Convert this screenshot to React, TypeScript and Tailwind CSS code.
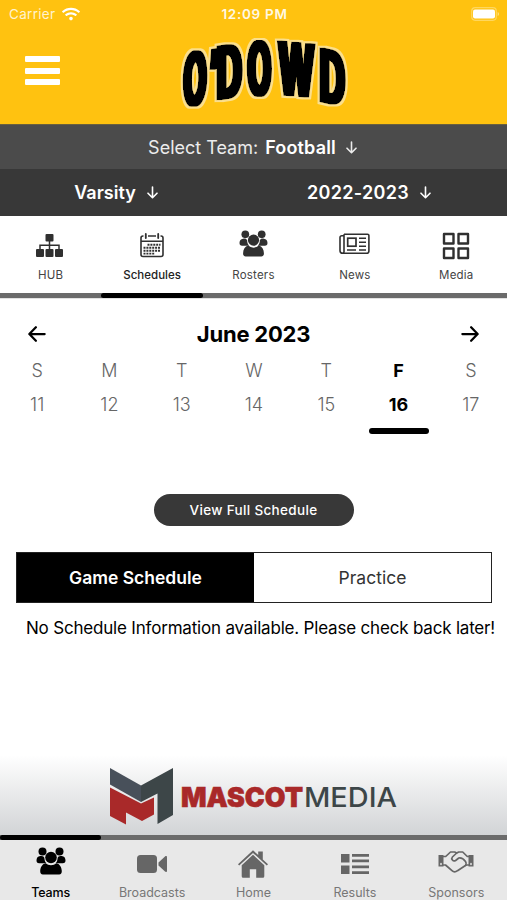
import { useState } from 'react'
import type { ReactNode } from 'react'
import clsx from 'clsx'
import { FaWifi } from 'react-icons/fa'

type IconProps = { className?: string }

function ArrowIcon({ className, strokeWidth = 2 }: IconProps & { strokeWidth?: number }) {
  return (
    <svg viewBox="0 0 16 16" className={className} fill="none" stroke="currentColor" strokeWidth={strokeWidth} strokeLinecap="round" strokeLinejoin="round">
      <path d="M14.800 8H1.500M7 2L1.200 8L7 14" />
    </svg>
  )
}

function DownArrow() {
  return (
    <svg viewBox="0 0 11 13" className="h-[13px] w-[11px]" fill="none" stroke="currentColor" strokeWidth={1.600} strokeLinecap="round" strokeLinejoin="round">
      <path d="M5.500 1v10.500M1 7.200l4.500 4.500L10 7.200" />
    </svg>
  )
}

function HubIcon() {
  return (
    <svg viewBox="0 0 27 23" className="mr-0.5 h-[23px] w-[27px]" fill="currentColor">
      <rect x="9.500" y="0" width="8" height="7.500" rx="1" />
      <rect x="0" y="15" width="8" height="8" rx="1" />
      <rect x="9.500" y="15" width="8" height="8" rx="1" />
      <rect x="19" y="15" width="8" height="8" rx="1" />
      <path d="M13.500 7v8M4 15v-3.700h19V15" fill="none" stroke="currentColor" strokeWidth="1.500" />
    </svg>
  )
}

function CalendarIcon() {
  return (
    <svg viewBox="0 0 24 25" className="h-[25px] w-6">
      <path d="M3.500 3H3a2 2 0 0 0-2 2v16.500a2 2 0 0 0 2 2h18a2 2 0 0 0 2-2V5a2 2 0 0 0-2-2h-.5M8 3h8M1 8.300h22" fill="none" stroke="currentColor" strokeWidth="1.600" />
      <path d="M5.800 1v4M18.200 1v4" stroke="currentColor" strokeWidth="1.800" strokeLinecap="round" />
      <path d="M7.500 11.800h13M3.500 14.800h17M3.500 17.800h17M3.500 20.600h11" stroke="currentColor" strokeWidth="1.900" strokeDasharray="2 0.900" fill="none" />
    </svg>
  )
}

function TeamIcon({ className }: IconProps) {
  return (
    <svg viewBox="0 0 30 28" className={className} fill="currentColor">
      <circle cx="6.500" cy="4.500" r="4" />
      <circle cx="23.500" cy="4.500" r="4" />
      <path d="M4.200 9C7 8.600 8.500 9.500 8.500 12c.2 1.900.8 3.200 2 4.300H3.200C1.300 16.300.4 15.300.5 13.300c.1-2.400 1.200-4.100 3.700-4.300zM25.800 9c-2.800-.4-4.300.5-4.300 3-.2 1.900-.8 3.200-2 4.300h7.300c1.900 0 2.800-1 2.700-3-.1-2.400-1.200-4.100-3.700-4.300z" />
      <circle cx="15" cy="10.500" r="5.800" />
      <path d="M9.500 16.200C6 17.200 4.300 20.300 4.200 24c0 2.200.8 3.500 2.700 3.500h16.200c1.900 0 2.700-1.300 2.700-3.500-.1-3.700-1.800-6.800-5.300-7.800a8.300 8.300 0 0 1-11 0z" />
    </svg>
  )
}

function NewsIcon() {
  return (
    <svg viewBox="0 0 31 22" className="mb-0.5 h-[22px] w-[31px]" fill="none" stroke="currentColor">
      <path d="M5 1.200h23.500a1.400 1.400 0 0 1 1.400 1.400V18a2.300 2.300 0 0 1-2.300 2.300H3.700A2.700 2.700 0 0 1 1 17.700V4.500a1.700 1.700 0 0 1 1.700-1.700H5M5 1.200V18a1.800 1.800 0 0 1-1.500 2.200" strokeWidth="1.600" />
      <rect x="8.700" y="5.200" width="8.300" height="8" strokeWidth="1.700" />
      <path d="M20 5.200h7M20 9.200h7M20 13.200h7M8 17h9M20 17h7" strokeWidth="1.600" />
    </svg>
  )
}

function GridIcon() {
  return (
    <svg viewBox="0 0 28 28" className="mt-0.5 size-7" fill="none" stroke="currentColor" strokeWidth="2.400" strokeLinejoin="round">
      <path d="M2 2h9.500v9.500H2zM16.500 2H26v9.500h-9.500zM2 16.500h9.500V26H2zM16.500 16.500H26V26h-9.500z" />
    </svg>
  )
}

function VideoIcon() {
  return (
    <svg viewBox="0 0 30 20" className="h-5 w-[30px]" fill="currentColor">
      <rect x="0" y="1" width="20" height="18" rx="3.500" />
      <path d="M21.500 8.500l6.500-6c1-.8 2-.4 2 .8v13.400c0 1.200-1 1.600-2 .8l-6.500-6z" />
    </svg>
  )
}

function HomeIcon() {
  return (
    <svg viewBox="0 0 30 28" className="h-7 w-[30px]" fill="currentColor">
      <path d="M0 14.200L15 .3l5.200 4.800V1.500h4.600v7.900l5.200 4.800-1.200 1.300L15 2.900 1.200 15.500z" />
      <path d="M15 4.800l11.300 10.400v11a1.500 1.500 0 0 1-1.500 1.500h-6.600v-8.500h-6.400v8.500H5.200a1.500 1.500 0 0 1-1.500-1.500v-11z" />
    </svg>
  )
}

function ResultsIcon() {
  return (
    <svg viewBox="0 0 28 20" className="h-5 w-7" fill="currentColor">
      <rect width="8.500" height="8.500" />
      <rect y="11.500" width="8.500" height="8.500" />
      <path d="M11 0h17v2.800H11zM11 5.500h17v2.800H11zM11 11.500h17v2.800H11zM11 17.200h17V20H11z" />
    </svg>
  )
}

function HandshakeIcon() {
  return (
    <svg viewBox="0 0 36 24" className="mb-1 h-6 w-9" fill="none" stroke="currentColor" strokeWidth="1.700" strokeLinejoin="round" strokeLinecap="round">
      <path d="M.5 5h5v11.500h-5zM30.500 5h5v11.500h-5z" fill="currentColor" stroke="none" />
      <path d="M3 13.500v1M33 13.500v1" stroke="#e8e8e8" strokeWidth="1.500" />
      <path d="M5.500 6.500h2.200L12.500 2h4.200l2 1 2-1h4l4.600 4.500h1.200M5.500 15h2l6.500 5.700c1.700 1.600 3.500 1.600 5.500 0l8.700-5.700h2.300" />
      <path d="M18.700 3l-4.300 4c-1.600 1.900.6 5 3.200 3.500l3.200-2.500c3.200-.6 5.200 1.500 6.700 3.500 1.200 1.800 1 2.700.2 3.900" />
    </svg>
  )
}

// sx squeezes each letter, skew tilts it along the arch
const letters = [
  { char: 'O', x: 2.5, y: 71.5, size: 75, sx: 0.4, skew: -0.32 },
  { char: '’', x: 27.5, y: 60, size: 66, sx: 0.55, skew: -0.2 },
  { char: 'D', x: 35.5, y: 62.5, size: 75, sx: 0.475, skew: -0.15 },
  { char: 'O', x: 66.5, y: 58, size: 75, sx: 0.41, skew: 0 },
  { char: 'W', x: 97, y: 57, size: 75, sx: 0.46, skew: 0.09 },
  { char: 'D', x: 138.5, y: 63.5, size: 75, sx: 0.475, skew: 0.24 },
]

function SchoolLogo() {
  return (
    <svg viewBox="0 0 170 74" className="h-[74px] w-[170px] overflow-visible" role="img">
      <defs>
        <filter id="logo-outline" x="-5%" y="-5%" width="110%" height="110%">
          <feMorphology in="SourceGraphic" operator="dilate" radius="2 0.1" result="bold" />
          <feMorphology in="bold" operator="dilate" radius="1.500" result="wide" />
          <feFlood floodColor="#fbdf8d" />
          <feComposite in2="wide" operator="in" result="edge" />
          <feMerge>
            <feMergeNode in="edge" />
            <feMergeNode in="bold" />
          </feMerge>
        </filter>
      </defs>
      <g filter="url(#logo-outline)" fontFamily="Inter, sans-serif" fontWeight="800">
        {letters.map((l, i) => (
          <text key={i} fontSize={l.size} transform={`matrix(${l.sx} ${l.skew * l.sx} 0 1 ${l.x} ${l.y})`}>{l.char}</text>
        ))}
      </g>
    </svg>
  )
}

function MascotMediaLogo() {
  return (
    <svg viewBox="0 0 290 60" className="h-[60px] w-[290px] overflow-visible">
      <path d="M1 1l31 17.500v16.500L1 17.500z" fill="#48505a" />
      <path d="M32 18.500L64 1v47L48.500 57V26.500L32 35z" fill="#3d4648" />
      <path d="M1 20.500l31 16 13-6v17l-12 6.500-16-8.500v12L1 49z" fill="#a92929" />
      <g fontFamily="Inter, sans-serif" fontSize="27.500" strokeWidth="0.600">
        <text x="72" y="40" textLength="122" lengthAdjust="spacingAndGlyphs" fontWeight="900" fill="#a92929" stroke="#a92929">MASCOT</text>
        <text x="195" y="40" textLength="93" lengthAdjust="spacingAndGlyphs" fontWeight="500" fill="#3d4648">MEDIA</text>
      </g>
    </svg>
  )
}

const sections: { label: string; icon: ReactNode }[] = [
  { label: 'HUB', icon: <HubIcon /> },
  { label: 'Schedules', icon: <CalendarIcon /> },
  { label: 'Rosters', icon: <TeamIcon className="mb-[3px] h-[27px] w-[29px]" /> },
  { label: 'News', icon: <NewsIcon /> },
  { label: 'Media', icon: <GridIcon /> },
]

const navItems: { label: string; icon: ReactNode }[] = [
  { label: 'Teams', icon: <TeamIcon className="h-[28px] w-[30px]" /> },
  { label: 'Broadcasts', icon: <VideoIcon /> },
  { label: 'Home', icon: <HomeIcon /> },
  { label: 'Results', icon: <ResultsIcon /> },
  { label: 'Sponsors', icon: <HandshakeIcon /> },
]

const days = [
  { name: 'S', date: 11 },
  { name: 'M', date: 12 },
  { name: 'T', date: 13 },
  { name: 'W', date: 14 },
  { name: 'T', date: 15 },
  { name: 'F', date: 16 },
  { name: 'S', date: 17 },
]

export default function App() {
  const [section, setSection] = useState('Schedules')
  const [selectedDate, setSelectedDate] = useState(16)
  const [tab, setTab] = useState('Game Schedule')

  return (
    <div className="flex h-[900px] w-[507px] flex-col overflow-hidden bg-white font-['Inter',sans-serif] text-black">
      <header className="h-[124px] shrink-0 bg-[#ffc210] text-white">
        <div className="grid h-7 grid-cols-3 items-center pl-[9px] pr-[7px] text-[13.5px]">
          <div className="flex items-center gap-[7px] tracking-[0.3px] text-[#fff3cf]">
            Carrier
            <FaWifi size={18} className="text-white" />
          </div>
          <div className="text-center font-semibold tracking-[0.7px] text-[#fff8e4]">12:09 PM</div>
          <div className="flex justify-end">
            <svg viewBox="0 0 29 14" className="h-3.5 w-[29px]">
              <rect x="0.700" y="0.700" width="24.600" height="12.600" rx="3.500" fill="none" stroke="#ffd75e" strokeWidth="1.200" />
              <rect x="2" y="2.500" width="22" height="9" rx="2" fill="#fff" />
              <path d="M26.700 5v4c1.700-.8 1.700-3.200 0-4z" fill="#ffe18a" />
            </svg>
          </div>
        </div>
        <div className="grid grid-cols-[156px_1fr_156px] pt-2.5">
          <button className="ml-[25px] mt-[18px] flex h-[29px] w-[35px] flex-col justify-between">
            <span className="h-[6px] w-full rounded-[1px] bg-white" />
            <span className="h-[6px] w-full rounded-[1px] bg-white" />
            <span className="h-[6px] w-full rounded-[1px] bg-white" />
          </button>
          <div className="ml-[25px]">
            <SchoolLogo />
          </div>
        </div>
      </header>

      <button className="flex h-[45px] shrink-0 items-center justify-center border-t border-[#69603f] bg-[#4b4b4b] pr-0.5 text-[18px] text-[#ececec]">
        <span>Select Team:</span>
        <span className="ml-[7px] mr-2.5 font-semibold tracking-[0.15px] text-white">Football</span>
        <DownArrow />
      </button>
      <div className="flex h-[47px] shrink-0 items-center bg-[#383838] text-[18px] font-semibold text-white">
        <button className="flex w-[232px] items-center justify-center gap-[11px]">
          Varsity
          <DownArrow />
        </button>
        <button className="flex w-[274px] items-center justify-center gap-[11px] tracking-[0.3px]">
          2022-2023
          <DownArrow />
        </button>
      </div>

      <nav className="grid h-[83px] shrink-0 grid-cols-5 border-b border-[#e2e2e2]">
        {sections.map(({ label, icon }) => (
          <button
            key={label}
            onClick={() => setSection(label)}
            className="flex flex-col items-center justify-between text-[#303030]"
          >
            <span className="mt-[15px] flex h-7 items-center">{icon}</span>
            <span
              className={clsx(
                'mt-[7px] text-[11.5px] leading-[18px]',
                section === label ? 'font-medium text-[#222]' : 'tracking-[0.2px] text-[#444]',
              )}
            >
              {label}
            </span>
            <span className="mt-auto h-[5px] w-full bg-[#6b6b6b]">
              {section === label && <span className="block h-full w-full rounded-full bg-black" />}
            </span>
          </button>
        ))}
      </nav>

      <main className="flex-1">
        <div className="flex h-[36px] items-center justify-between px-7 pt-[34px]">
          <button><ArrowIcon className="size-[18px]" /></button>
          <h1 className="text-[22px] font-bold leading-none tracking-[-0.2px]">June 2023</h1>
          <button><ArrowIcon className="size-[18px] rotate-180" /></button>
        </div>
        <div className="mt-[19px] grid grid-cols-7 pl-px">
          {days.map(({ name, date }) => (
            <button
              key={date}
              onClick={() => setSelectedDate(date)}
              className={clsx(
                'flex flex-col items-center text-[18px] leading-[34px]',
                selectedDate === date ? 'font-bold text-black' : 'font-light text-[#666]',
              )}
            >
              <span>{name}</span>
              <span>{date}</span>
              {selectedDate === date && <span className="mt-[6px] h-1.5 w-[60px] rounded-full bg-black" />}
            </button>
          ))}
        </div>

        <button className="mx-auto mt-[60px] block h-8 w-[200px] rounded-full bg-[#383838] text-[13.5px] font-medium tracking-[0.33px] text-white">
          View Full Schedule
        </button>

        <div className="mx-4 mt-[26px] grid h-[51px] w-[476px] grid-cols-2 border border-[#222] text-[17.5px]">
          {['Game Schedule', 'Practice'].map((label) => (
            <button
              key={label}
              onClick={() => setTab(label)}
              className={clsx('pt-px', tab === label ? 'bg-black font-semibold text-white' : 'text-[#333]')}
            >
              {label}
            </button>
          ))}
        </div>
        <p className="mt-[13px] whitespace-nowrap pl-[26px] text-[17px] leading-6 tracking-[-0.19px]">
          No Schedule Information available. Please check back later!
        </p>
      </main>

      <div className="flex h-[80px] shrink-0 justify-center bg-linear-to-b from-white to-[#d2d4d6] pt-3">
        <MascotMediaLogo />
      </div>

      <nav className="grid h-[65px] shrink-0 grid-cols-5 bg-[#e8e8e8]">
        {navItems.map(({ label, icon }) => (
          <button
            key={label}
            className={clsx('flex flex-col items-center', label === 'Teams' ? 'text-black' : 'text-[#666]')}
          >
            <span className="h-[5px] w-full bg-[#6b6b6b]">
              {label === 'Teams' && <span className="block h-full w-full rounded-full bg-black" />}
            </span>
            <span className={clsx('flex h-7 items-center', label === 'Teams' ? 'mt-[7px] mb-[9px]' : 'mt-2.5 mb-1.5')}>{icon}</span>
            <span
              className={clsx(
                'text-[12.5px] leading-[18px]',
                label === 'Teams' ? 'font-medium tracking-[-0.1px]' : 'text-[#777]',
              )}
            >
              {label}
            </span>
          </button>
        ))}
      </nav>
    </div>
  )
}
